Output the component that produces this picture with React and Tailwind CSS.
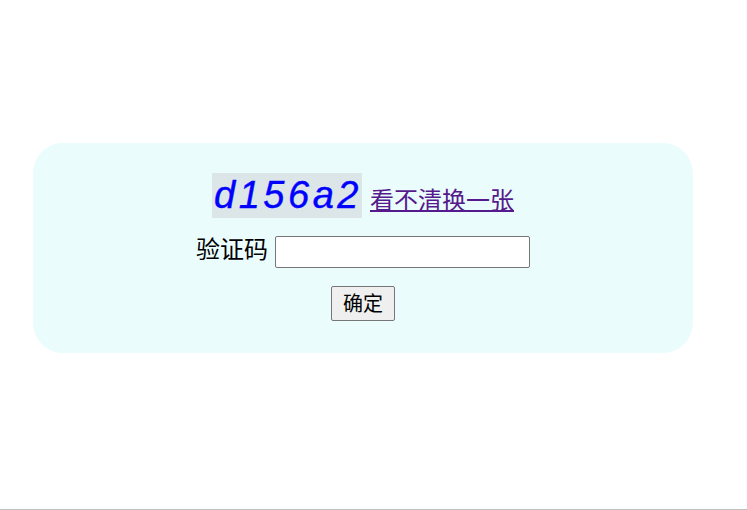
export default function App() {
  return (
    <main className="flex h-[510px] w-[747px] flex-col border-b border-[#c0c0c0] bg-white pt-[143px] pl-[33px] font-['Liberation_Sans','Noto_Sans_CJK_SC',sans-serif] text-black">
      <form className="flex h-[210px] w-[660px] flex-col items-center rounded-[30px] bg-[#ebfcfd] pt-[30px]" onSubmit={(e) => e.preventDefault()}>
        <div className="flex h-[45px] items-start gap-2">
          <div className="flex h-[45px] w-[150px] justify-center bg-[#dce6e8] pl-[2px] text-[38px] leading-[45px] tracking-[3.5px] whitespace-nowrap text-[#0000ff] italic [-webkit-text-stroke:0.4px_#0000ff]">d156a2</div>
          <a href="#" className="w-[144px] pt-[10px] text-[24px] leading-[36px] whitespace-nowrap text-[#551a8b] underline decoration-2 underline-offset-[1px]">看不清换一张</a>
        </div>
        <label className="mt-[18px] flex h-8 items-center gap-[7px] text-[24px] leading-8 whitespace-nowrap">
          <span className="relative -top-[2px]">验证码</span>
          <input className="h-8 w-[255px] rounded-[2px] border border-[#767676] bg-white px-1 text-[20px] outline-none" />
        </label>
        <button className="mt-[18px] h-[35px] w-16 rounded-[2px] border border-[#767676] bg-[#efefef] text-[20px] leading-[32px]">确定</button>
      </form>
    </main>
  );
}
